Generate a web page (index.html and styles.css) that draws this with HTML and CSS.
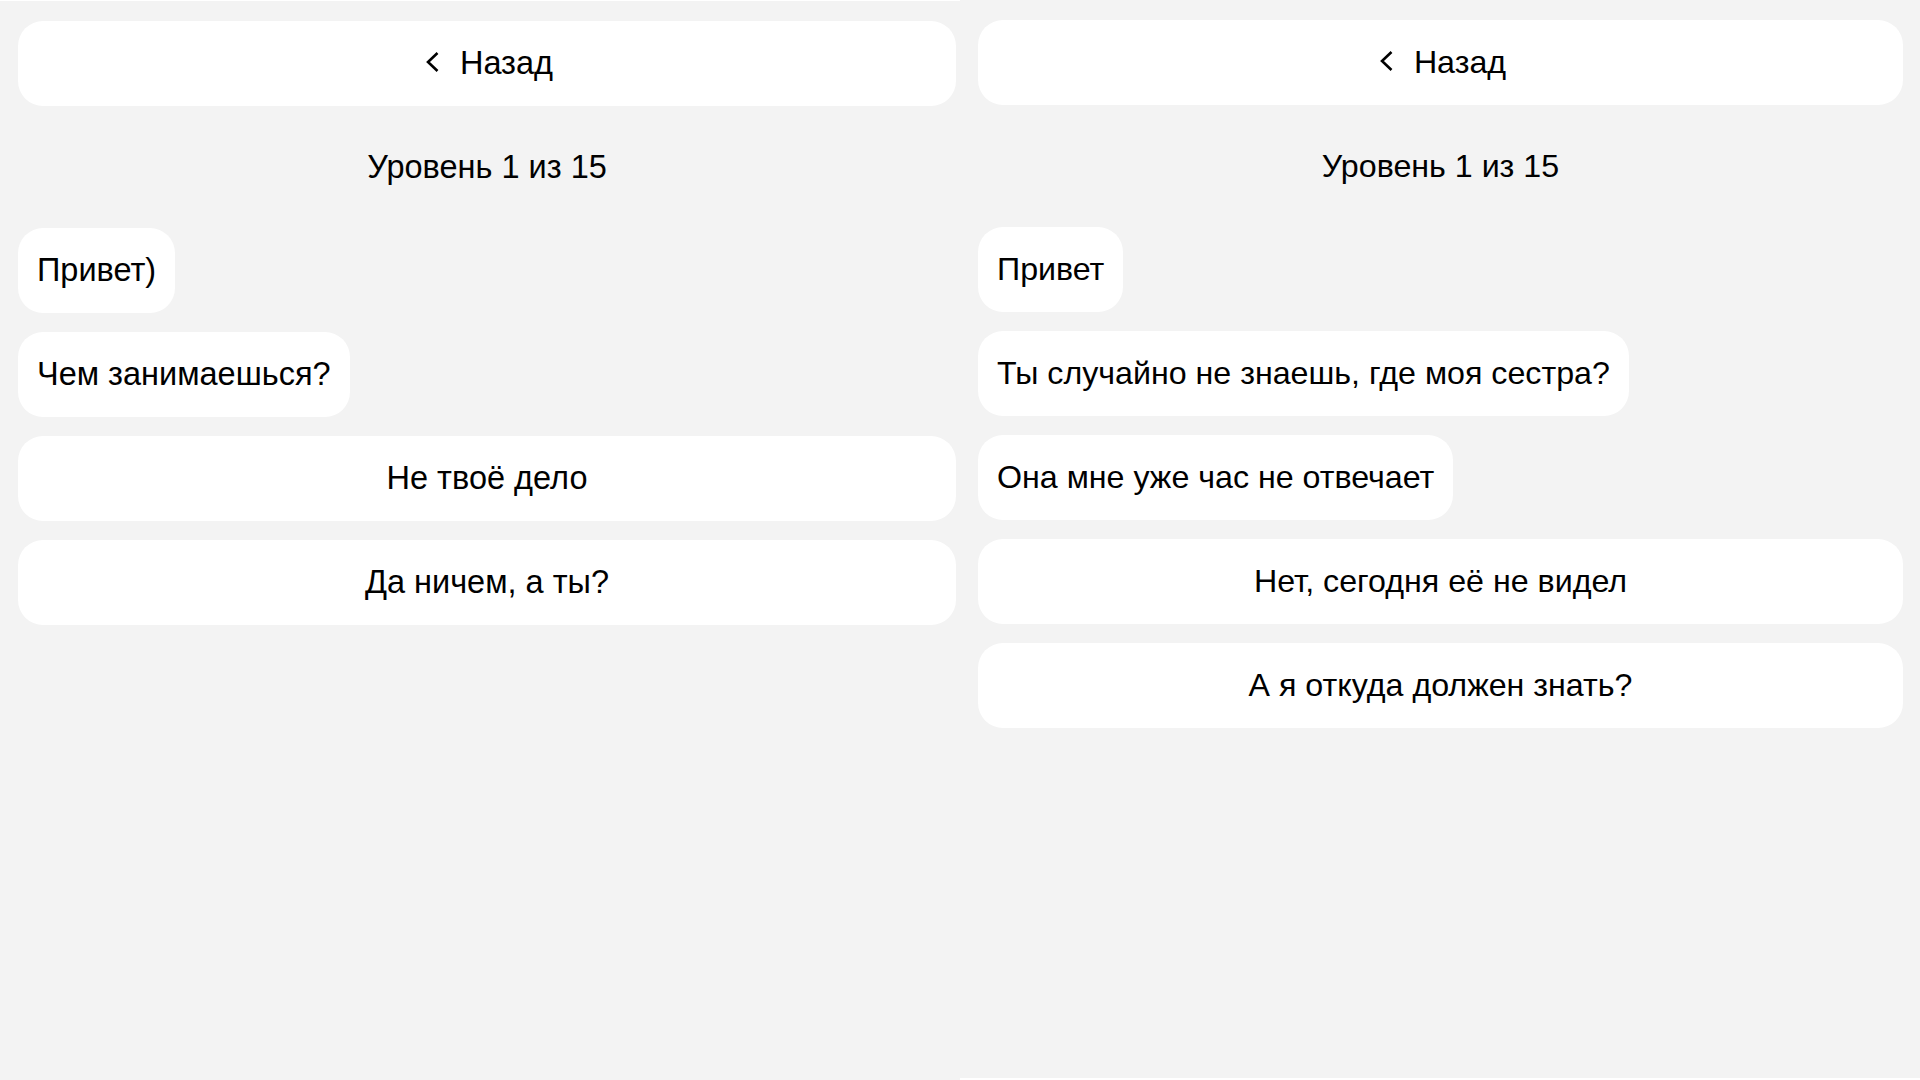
FILE: index.html
```html
<!DOCTYPE html>
<html lang="ru">
<head>
<meta charset="utf-8">
<title>Уровень 1 из 15</title>
<link rel="stylesheet" href="styles.css">
</head>
<body>
<div class="screens">
  <section class="screen screen-left">
    <button class="back">
      <svg class="chev" width="24" height="24" viewBox="0 0 24 24"><path d="M16.5 3 L7 12 L16.5 21" fill="none" stroke="#000" stroke-width="2.6" stroke-linecap="butt" stroke-linejoin="miter"/></svg>
      <span>Назад</span>
    </button>
    <div class="level">Уровень 1 из 15</div>
    <div class="msg">Привет)</div>
    <div class="msg">Чем занимаешься?</div>
    <button class="option">Не твоё дело</button>
    <button class="option">Да ничем, а ты?</button>
  </section>
  <section class="screen screen-right">
    <button class="back">
      <svg class="chev" width="24" height="24" viewBox="0 0 24 24"><path d="M16.5 3 L7 12 L16.5 21" fill="none" stroke="#000" stroke-width="2.6" stroke-linecap="butt" stroke-linejoin="miter"/></svg>
      <span>Назад</span>
    </button>
    <div class="level">Уровень 1 из 15</div>
    <div class="msg">Привет</div>
    <div class="msg">Ты случайно не знаешь, где моя сестра?</div>
    <div class="msg">Она мне уже час не отвечает</div>
    <button class="option">Нет, сегодня её не видел</button>
    <button class="option">А я откуда должен знать?</button>
  </section>
</div>
</body>
</html>
```
FILE: styles.css
```css
* { box-sizing: border-box; }
html, body {
  margin: 0;
  padding: 0;
  background: #f3f3f3;
}
body {
  font-family: "Liberation Sans", Arial, sans-serif;
  color: #000;
  width: 1920px;
  height: 1080px;
  overflow: hidden;
}
.screens {
  display: flex;
  width: 1920px;
  height: 1080px;
}
.screen {
  --fs: 32px;
  width: 960px;
  height: 1080px;
  display: flex;
  flex-direction: column;
  align-items: stretch;
  gap: 19px;
  background: #f3f3f3;
  font-size: var(--fs);
}
.screen-left {
  --fs: 32.5px;
  border-top: 1px solid #ffffff;
  padding: 20px 4px 0 18px;
}
.screen-right {
  --fs: 32.2px;
  border-bottom: 2px solid #ffffff;
  padding: 20px 17px 0 18px;
}
.back, .option, .msg {
  font-family: "Liberation Sans", Arial, sans-serif;
  font-size: var(--fs);
  line-height: 37px;
  height: 85px;
  color: #000;
  background: #ffffff;
  border: none;
  border-radius: 25px;
  padding: 24px 19px;
  margin: 0;
}
.back {
  display: flex;
  align-items: center;
  justify-content: center;
  gap: 15px;
  cursor: pointer;
}
.back span { display: block; }
.chev {
  display: block;
  flex: none;
  position: relative;
  top: -2px;
}
.level {
  font-size: var(--fs);
  line-height: 37px;
  text-align: center;
  margin: 24px 0 23px;
}
.msg {
  align-self: flex-start;
  white-space: nowrap;
}
.option {
  text-align: center;
  width: 100%;
  cursor: pointer;
}
```
